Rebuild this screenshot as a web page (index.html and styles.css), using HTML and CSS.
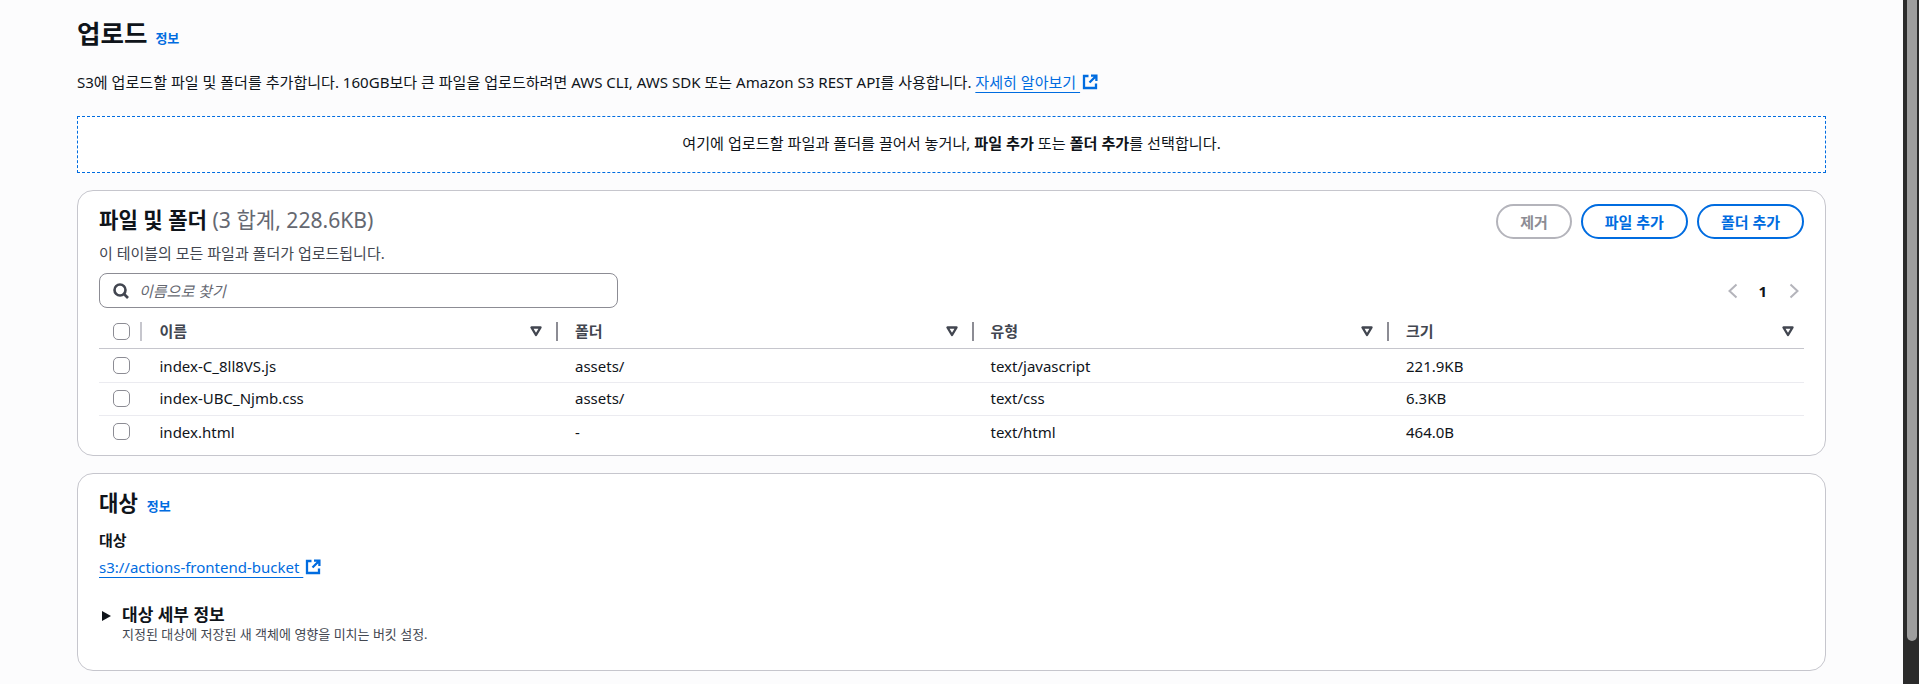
FILE: index.html
```html
<!DOCTYPE html>
<html lang="ko">
<head>
<meta charset="utf-8">
<title>업로드</title>
<link rel="stylesheet" href="styles.css">
</head>
<body>
<div class="shell">
<main class="page">
  <header class="page-head">
    <h1 class="page-title">업로드</h1>
    <a class="info">정보</a>
  </header>
  <p class="page-desc">S3에 업로드할 파일 및 폴더를 추가합니다. 160GB보다 큰 파일을 업로드하려면 AWS CLI, AWS SDK 또는 Amazon S3 REST API를 사용합니다. <a class="link">자세히 알아보기&nbsp;</a><svg class="ext" viewBox="0 0 16 16"><path d="M6.5 2H2v12h12V9.5M9 1.6h5.4V7M14 2L7.5 8.5"/></svg></p>
  <div class="drop">여기에 업로드할 파일과 폴더를 끌어서 놓거나,&nbsp;<b>파일 추가</b>&nbsp;또는&nbsp;<b>폴더 추가</b>를 선택합니다.</div>

  <section class="card files">
    <div class="card-top">
      <div class="card-heading">
        <h2 class="card-title">파일 및 폴더 <span class="count">(3 합계, 228.6KB)</span></h2>
        <p class="card-sub">이 테이블의 모든 파일과 폴더가 업로드됩니다.</p>
      </div>
      <div class="actions">
        <button class="btn btn-off">제거</button>
        <button class="btn">파일 추가</button>
        <button class="btn">폴더 추가</button>
      </div>
    </div>
    <div class="tools">
      <div class="search">
        <svg class="search-icon" viewBox="0 0 16 16"><circle cx="7" cy="7" r="5.5"/><path d="M11 11l4 4"/></svg>
        <span class="search-ph">이름으로 찾기</span>
      </div>
      <div class="pager">
        <svg class="pg" viewBox="0 0 16 16"><path d="M11.5 1.5L4.5 8l7 6.5"/></svg>
        <b class="pg-num">1</b>
        <svg class="pg" viewBox="0 0 16 16"><path d="M4.5 1.5l7 6.5-7 6.5"/></svg>
      </div>
    </div>
    <div class="table">
      <div class="row head">
        <div class="c-check"><span class="box"></span><i class="sep sep-light"></i></div>
        <div class="col">이름<svg class="sort" viewBox="0 0 14 14"><path d="M2.5 3.5h9L7 11z"/></svg><i class="sep"></i></div>
        <div class="col">폴더<svg class="sort" viewBox="0 0 14 14"><path d="M2.5 3.5h9L7 11z"/></svg><i class="sep"></i></div>
        <div class="col">유형<svg class="sort" viewBox="0 0 14 14"><path d="M2.5 3.5h9L7 11z"/></svg><i class="sep"></i></div>
        <div class="col col-last">크기<svg class="sort sort-last" viewBox="0 0 14 14"><path d="M2.5 3.5h9L7 11z"/></svg></div>
      </div>
      <div class="row row-first">
        <div class="c-check"><span class="box"></span></div>
        <div class="col">index-C_8ll8VS.js</div><div class="col">assets/</div><div class="col">text/javascript</div><div class="col col-last">221.9KB</div>
      </div>
      <div class="row">
        <div class="c-check"><span class="box"></span></div>
        <div class="col">index-UBC_Njmb.css</div><div class="col">assets/</div><div class="col">text/css</div><div class="col col-last">6.3KB</div>
      </div>
      <div class="row row-end">
        <div class="c-check"><span class="box"></span></div>
        <div class="col">index.html</div><div class="col">-</div><div class="col">text/html</div><div class="col col-last">464.0B</div>
      </div>
    </div>
  </section>

  <section class="card dest">
    <div class="dest-head"><h2 class="card-title">대상</h2><a class="info">정보</a></div>
    <div class="label">대상</div>
    <div class="dest-link"><a class="link">s3://actions-frontend-bucket&nbsp;</a><svg class="ext" viewBox="0 0 16 16"><path d="M6.5 2H2v12h12V9.5M9 1.6h5.4V7M14 2L7.5 8.5"/></svg></div>
    <div class="expander">
      <span class="caret"></span>
      <div>
        <div class="exp-title">대상 세부 정보</div>
        <div class="exp-sub">지정된 대상에 저장된 새 객체에 영향을 미치는 버킷 설정.</div>
      </div>
    </div>
  </section>
</main>
<div class="scrollbar"><div class="thumb"></div></div>
</div>
</body>
</html>
```

FILE: styles.css
```css
* { box-sizing: border-box; }
html, body { margin: 0; height: 100%; overflow: hidden; }
body {
  background: #fcfcfd;
  color: #0f141a;
  font-family: "Noto Sans", "Noto Sans CJK KR", sans-serif;
  font-size: 15px;
  line-height: 20px;
}
.shell { display: flex; height: 684px; }
.page { flex: 1; padding: 14px 77px 0 77px; min-width: 0; }
.scrollbar { width: 16px; background: #2b2b2b; padding: 0 2px 0 4px; }
.thumb { height: 641px; background: #9e9e9e; border-radius: 0 0 5px 5px; }
.page-head { display: flex; align-items: baseline; gap: 8px; height: 38px; }
.page-title { margin: 0; font-size: 25.5px; line-height: 38px; font-weight: 700; }
.info { color: #006ce0; font-size: 13px; font-weight: 700; }
.dest-head .info { margin-left: 1px; }
.page-desc { margin: 20px 0 0; display: flex; align-items: center; white-space: pre; font-size: 15.06px; }
.link { color: #006ce0; text-decoration: underline; text-underline-offset: 4px; }
.ext { width: 16px; height: 16px; margin-left: 2px; fill: none; stroke: #006ce0; stroke-width: 2.3; }
.drop {
  margin-top: 24px; height: 57px; padding-bottom: 3px; font-size: 15.14px;
  display: flex; align-items: center; justify-content: center;
  border: 1px dashed #006ce0; background: #fff;
}
.card { background: #fff; border: 1px solid #c6c6cd; border-radius: 16px; padding: 0 21px; }
.files { margin-top: 17px; height: 266px; padding-top: 13px; }
.card-top { display: flex; justify-content: space-between; }
.card-heading { padding-top: 1px; }
.card-title { margin: 0; font-size: 21.1px; line-height: 30px; font-weight: 700; }
.count { color: #656871; font-weight: 400; }
.card-sub { margin: 8px 0 0; color: #424650; }
.actions { display: flex; gap: 9px; }
.btn {
  height: 35px; padding: 0 22px; border: 2px solid #006ce0; border-radius: 20px;
  background: #fff; color: #006ce0; font: inherit; font-weight: 700;
}
.btn-off { border-color: #b4b4bb; color: #8c8c94; }
.tools { display: flex; justify-content: space-between; align-items: center; margin-top: 10px; }
.search {
  width: 519px; height: 35px; display: flex; align-items: center; gap: 10px; padding-left: 13px;
  border: 1px solid #8c8c94; border-radius: 8px; background: #fff;
}
.search-icon { width: 16px; height: 16px; fill: none; stroke: #424650; stroke-width: 2.6; }
.search-ph { color: #656871; font-style: italic; }
.pager { display: flex; align-items: center; gap: 19px; padding-right: 2px; }
.pg { width: 16px; height: 16px; fill: none; stroke: #b4b4bb; stroke-width: 2; }
.pg-num { margin-left: -2px; }
.table { margin-top: 6px; }
.row { display: flex; height: 33px; padding-bottom: 2px; align-items: center; border-bottom: 1px solid #ebebf0; }
.head { height: 35px; padding-bottom: 0; border-bottom-color: #c6c6cd; font-weight: 700; color: #424650; }
.row-first { height: 34px; padding-bottom: 0; }
.row-end { border-bottom: 0; }
.c-check { width: 60.5px; padding-left: 14px; display: flex; align-items: center; }
.box { width: 17px; height: 17px; border: 1px solid #8c8c94; border-radius: 5px; background: #fff; }
.col { width: 415.5px; padding-right: 17px; display: flex; align-items: center; }
.col-last { width: auto; flex: 1; padding-right: 9px; }
.sort { width: 14px; height: 14px; margin-left: auto; margin-right: 13px; fill: none; stroke: #424650; stroke-width: 2.4; stroke-linejoin: round; }
.sort-last { margin-right: 0; }
.sep { width: 2px; height: 19px; background: #8c8c94; }
.sep-light { background: #c6c6cd; margin-left: 10px; }
.dest { margin-top: 17px; height: 198px; padding-top: 14px; }
.dest-head { display: flex; align-items: baseline; gap: 8px; }
.label { margin-top: 12px; font-weight: 700; }
.dest-link { margin-top: 7px; display: flex; align-items: center; white-space: pre; }
.expander { margin-top: 28px; display: flex; align-items: flex-start; gap: 11px; }
.caret { margin: 6px 0 0 3px; border-left: 9px solid #0f141a; border-top: 5px solid transparent; border-bottom: 5px solid transparent; }
.exp-title { font-weight: 700; font-size: 17px; line-height: 20px; }
.exp-sub { color: #424650; font-size: 13px; line-height: 18px; }
```
